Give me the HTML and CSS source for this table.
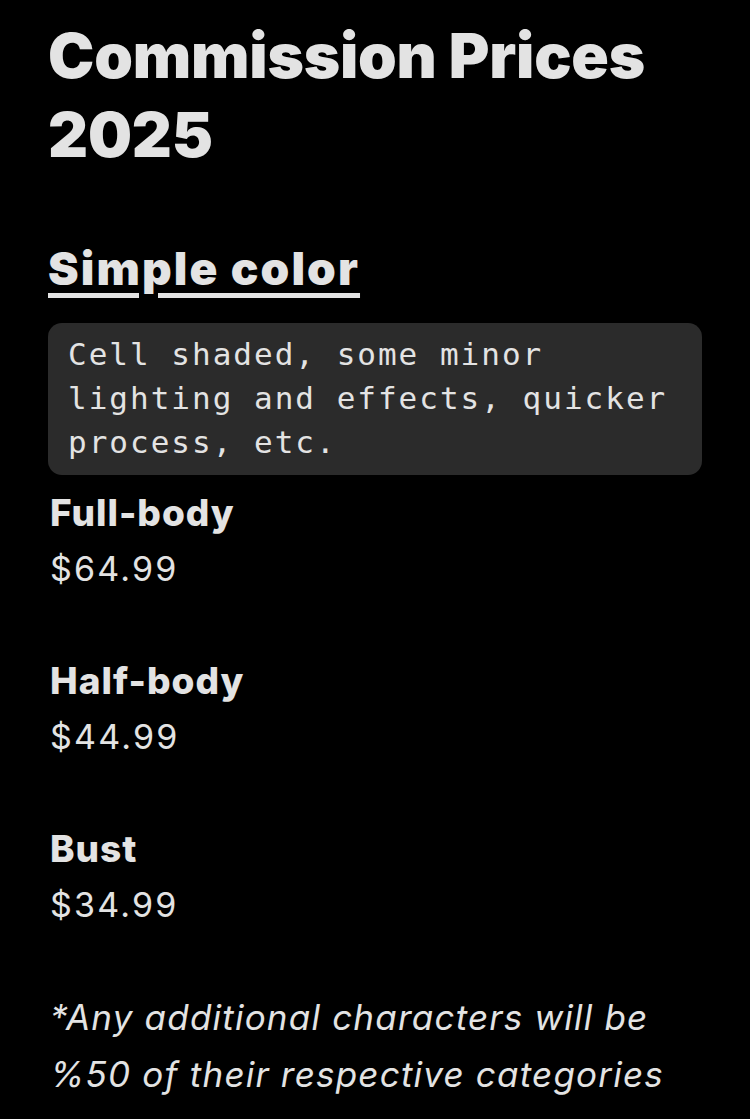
FILE: index.html
```html
<!DOCTYPE html>
<html>
<head>
<meta charset="utf-8">
<link rel="stylesheet" href="styles.css">
</head>
<body>
<div class="note">
  <h1 class="title">Commission Prices 2025</h1>
  <h2 class="heading">Simple color</h2>
  <div class="code">Cell shaded, some minor lighting and effects, quicker process, etc.</div>
  <div class="item">
    <div class="name">Full-body</div>
    <div class="price">$64.99</div>
  </div>
  <div class="item">
    <div class="name">Half-body</div>
    <div class="price">$44.99</div>
  </div>
  <div class="item">
    <div class="name">Bust</div>
    <div class="price">$34.99</div>
  </div>
  <p class="foot">*Any additional characters will be %50 of their respective categories</p>
</div>
</body>
</html>
```
FILE: styles.css
```css
html, body {
  margin: 0;
  padding: 0;
  background: #000;
}
body {
  font-family: Inter, "Noto Sans", sans-serif;
  color: #e3e3e3;
}
.note {
  padding: 16px 48px 0 48px;
  width: 654px;
}
.title {
  margin: 0;
  font-size: 62px;
  font-weight: 900;
  line-height: 79px;
  letter-spacing: -0.2px;
}
.heading {
  margin: 66px 0 0 0;
  font-size: 46px;
  font-weight: 900;
  line-height: 56px;
  letter-spacing: 2.1px;
  text-decoration: underline;
  text-decoration-thickness: 5px;
  text-underline-offset: 8px;
}
.code {
  margin: 27px 0 10px 0;
  background: #2b2b2b;
  border-radius: 14px;
  padding: 9px 20px 11px 20px;
  font-family: "DejaVu Sans Mono", "Liberation Mono", monospace;
  font-size: 31px;
  line-height: 44px;
  letter-spacing: 2px;
}
.item {
  margin-bottom: 56px;
}
.name {
  font-size: 37px;
  font-weight: 800;
  line-height: 56px;
  letter-spacing: 1px;
  padding-left: 2px;
}
.price {
  font-size: 34px;
  font-weight: 400;
  line-height: 56px;
  letter-spacing: 2.2px;
  padding-left: 2px;
}
.foot {
  margin: 0;
  padding-left: 2px;
  font-size: 35px;
  font-style: italic;
  line-height: 57px;
  letter-spacing: 1.2px;
}
```
